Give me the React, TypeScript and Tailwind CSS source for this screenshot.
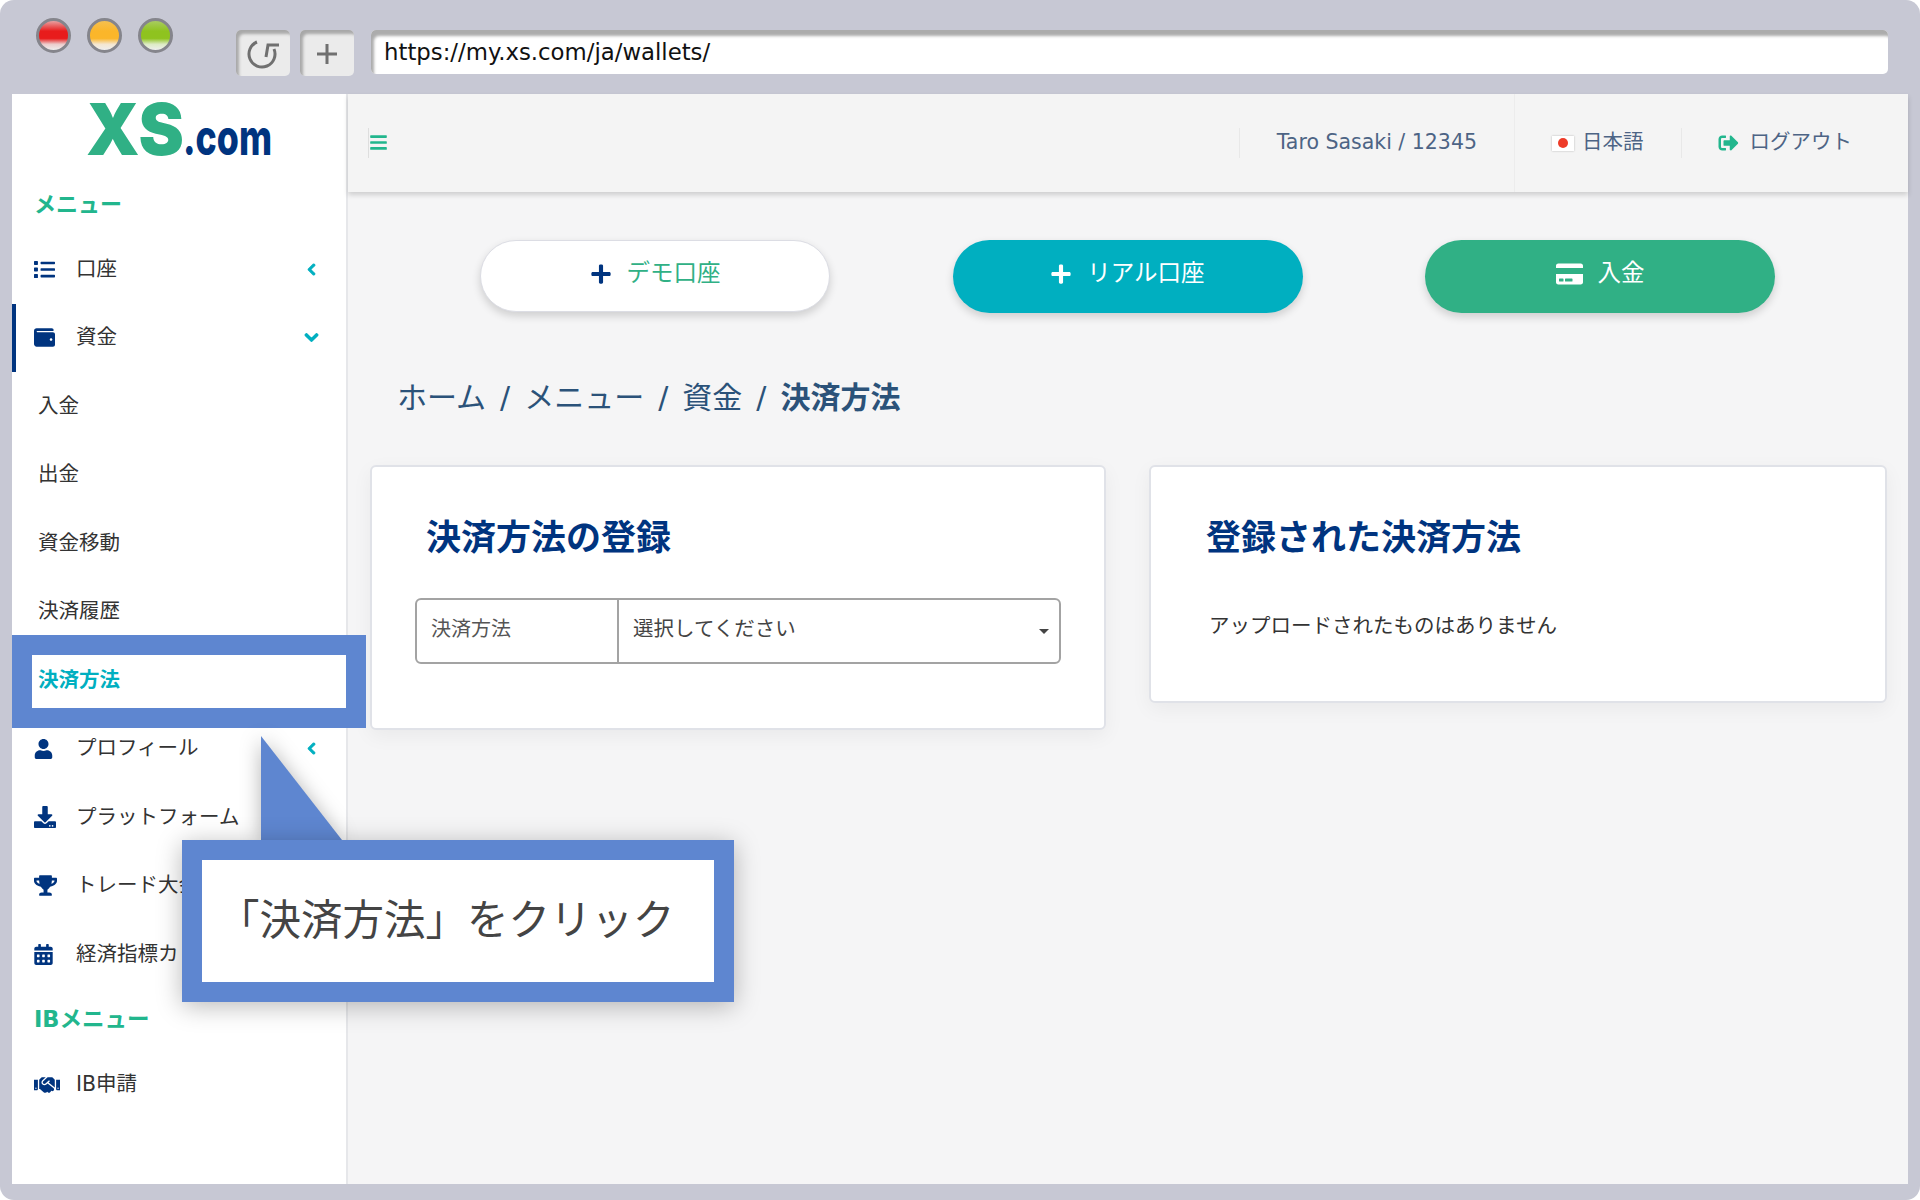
import React from 'react';
import { FaBars, FaCalendarAlt, FaChevronDown, FaChevronLeft, FaCreditCard, FaDownload, FaHandshake, FaList, FaPlus, FaSignOutAlt, FaTrophy, FaUser, FaWallet } from 'react-icons/fa';

const Light = ({ color }: { color: string }) => (
  <div className={`w-[35px] h-[35px] rounded-full border-[3px] border-[#85858c] ${color}`} />
);

const NavRow = ({ icon, label, chevron, active }: { icon: React.ReactNode; label: string; chevron?: 'left' | 'down'; active?: boolean }) => (
  <div className={`h-[68.5px] flex items-center pl-[18px] text-[20.5px] text-[#333] border-l-4 ${active ? 'border-[#00347f]' : 'border-transparent'}`}>
    <div className="w-[42px] flex items-center text-[#00347f]">{icon}</div>
    <span className="flex-1 whitespace-nowrap">{label}</span>
    {chevron === 'left' && <FaChevronLeft stroke="currentColor" strokeWidth={40} className="text-[#00afc0] w-[13px] h-[13px] mr-[28px]" />}
    {chevron === 'down' && <FaChevronDown stroke="currentColor" strokeWidth={40} className="text-[#00afc0] w-[15px] h-[15px] mr-[27px]" />}
  </div>
);

const SubRow = ({ label, active }: { label: string; active?: boolean }) => (
  <div className={`h-[68.5px] flex items-center pl-[26px] text-[20.5px] ${active ? 'font-bold text-[#00afc0]' : 'text-[#333]'}`}>{label}</div>
);

const Logo = () => (
  <svg width="240" height="84" viewBox="0 0 240 84" className="ml-[70px] -mt-[13px] overflow-visible">
    <text x="4" y="74" textLength="98" lengthAdjust="spacingAndGlyphs" fontFamily="Inter" fontWeight="900" fontSize="72" fill="#30b085">XS</text>
    <text x="101" y="74" textLength="89" lengthAdjust="spacingAndGlyphs" fontFamily="Inter" fontWeight="800" fontSize="50" fill="#00347f">.com</text>
  </svg>
);

export default function App() {
  return (
    <div className="relative w-[1920px] h-[1200px] bg-white font-['DejaVu_Sans','Noto_Sans_CJK_JP',sans-serif] overflow-hidden">
      <div className="w-full h-full rounded-[14px] bg-[#c7c8d4] px-3 flex flex-col">
        {/* browser chrome */}
        <div className="h-[94px] flex shrink-0">
          <div className="flex gap-[16px] ml-[24px] mt-[18px] h-[35px]">
            <Light color="bg-[linear-gradient(#e8a0a0_0%,#e81c1c_35%,#e81c1c_60%,#eccccc_80%,#eeeeee_100%)]" />
            <Light color="bg-[linear-gradient(#f5c050_0%,#fbb62a_35%,#fbb62a_60%,#f4e6d0_80%,#eeeeee_100%)]" />
            <Light color="bg-[linear-gradient(#a8cc60_0%,#8fc31f_35%,#8fc31f_60%,#dcebc4_80%,#eeeeee_100%)]" />
          </div>
          <div className="flex gap-[10px] ml-[63px] mt-[30px] h-[46px]">
            <div className="w-[54px] rounded-[5px] bg-[#ebebeb] shadow-[inset_3px_4px_3px_#a8a8a8] flex items-center justify-center pt-[2px]">
              <svg width="34" height="34" viewBox="0 0 34 34" fill="none" stroke="#707070" strokeWidth="3">
                <path d="M11 5A13 13 0 1 0 28 12" />
                <path d="M20 20L22 8H33" />
              </svg>
            </div>
            <div className="w-[54px] rounded-[5px] bg-[#ebebeb] shadow-[inset_3px_4px_3px_#a8a8a8] flex items-center justify-center pt-[2px]">
              <svg width="24" height="24" viewBox="0 0 24 24" stroke="#707070" strokeWidth="3"><path d="M12 2V22M2 12H22" /></svg>
            </div>
          </div>
          <div className="w-[1517px] h-[44px] ml-[17px] mt-[30px] rounded-[5px] bg-white shadow-[inset_3px_6px_3px_#acacac] flex items-center pl-[13px] text-[22.8px] text-[#111]">
            https://my.xs.com/ja/wallets/
          </div>
        </div>

        <div className="h-[1090px] flex shrink-0">
          {/* sidebar */}
          <aside className="w-[336px] shrink-0 bg-white border-r-2 border-[#e6e7ea]">
            <div className="h-[91px] flex items-start"><Logo /></div>
            <div className="h-[41px] flex items-center pl-[22px] pb-[2px] text-[22px] font-bold text-[#22b68d]">メニュー</div>
            <div className="mt-[9px]">
              <NavRow icon={<FaList className="w-[21px] h-[21px]" />} label="口座" chevron="left" />
              <NavRow icon={<FaWallet className="w-[21px] h-[21px]" />} label="資金" chevron="down" active />
              <SubRow label="入金" />
              <SubRow label="出金" />
              <SubRow label="資金移動" />
              <SubRow label="決済履歴" />
              <SubRow label="決済方法" active />
              <NavRow icon={<FaUser className="w-[19px] h-[20px]" />} label="プロフィール" chevron="left" />
              <NavRow icon={<FaDownload className="w-[22px] h-[22px]" />} label="プラットフォーム" />
              <NavRow icon={<FaTrophy className="w-[23px] h-[21px]" />} label="トレード大会" />
              <NavRow icon={<FaCalendarAlt className="w-[19px] h-[21px]" />} label="経済指標カレンダー" />
            </div>
            <div className="h-[62px] flex items-center pl-[22px] text-[22.5px] font-bold text-[#22b68d]">IBメニュー</div>
            <NavRow icon={<FaHandshake className="w-[26px] h-[22px]" />} label="IB申請" />
          </aside>

          {/* main */}
          <main className="w-[1560px] shrink-0 bg-[#f5f5f6]">
            <header className="h-[98px] bg-[#f4f4f4] shadow-[0_3px_5px_rgba(0,0,0,0.16)] flex items-center text-[20.5px] text-[#4d6485]">
              <div className="ml-[20px] h-[30px] pb-[2px] border-l border-[#dedede] flex items-center">
                <FaBars className="text-[#22b68d] w-[19px] h-[19px]" />
              </div>
              <div className="ml-auto h-[30px] border-l border-[#e8e8e8] flex items-center pl-[37px] pr-[37px] pb-[2px]">Taro Sasaki / 12345</div>
              <div className="h-full border-l border-[#ececec] flex items-center pl-[37px] pr-[37px]">
                <div className="w-[22px] h-[15px] bg-white shadow-[0_0_2px_rgba(0,0,0,0.25)] flex items-center justify-center mr-[8px]">
                  <div className="w-[10px] h-[10px] rounded-full bg-[#ee3b28]" />
                </div>
                <span className="pb-[2px]">日本語</span>
              </div>
              <div className="h-[30px] border-l border-[#e8e8e8] flex items-center pl-[36px] pr-[56px]">
                <FaSignOutAlt className="text-[#22b68d] w-[21px] h-[20px] mr-[11px]" />
                <span className="pb-[2px]">ログアウト</span>
              </div>
            </header>

            <div className="flex gap-[122.5px] pl-[132px] mt-[48px] text-[23.5px]">
              <div className="w-[350px] h-[72px] rounded-full bg-white border border-[#dcdde4] shadow-[0_4px_8px_rgba(0,0,0,0.16)] flex items-center justify-center gap-[15px] pb-[5px] text-[#30b085]">
                <FaPlus className="text-[#00347f] w-[22px] h-[22px]" />
                <span>デモ口座</span>
              </div>
              <div className="w-[350px] h-[73px] rounded-full bg-[#00afc0] shadow-[0_4px_8px_rgba(0,0,0,0.16)] flex items-center justify-center gap-[15px] pb-[5px] text-white">
                <FaPlus className="w-[22px] h-[22px]" />
                <span>リアル口座</span>
              </div>
              <div className="w-[350px] h-[73px] rounded-full bg-[#30b085] shadow-[0_4px_8px_rgba(0,0,0,0.16)] flex items-center justify-center gap-[15px] pb-[5px] text-white">
                <FaCreditCard className="w-[27px] h-[24px]" />
                <span>入金</span>
              </div>
            </div>

            <div className="mt-[63px] pl-[49px] h-[42px] flex items-center gap-[14px] text-[30px] text-[#2b5279]">
              <span>ホーム</span><span>/</span><span>メニュー</span><span>/</span><span>資金</span><span>/</span><span className="font-bold">決済方法</span>
            </div>

            <div className="mt-[47px] pl-[22px] flex items-start gap-[43px]">
              <section className="w-[736px] h-[265px] bg-white rounded-[6px] border-2 border-[#e0e2e8] shadow-[0_6px_20px_rgba(0,0,0,0.05)] pl-[43px] pt-[46px]">
                <h2 className="ml-[11px] text-[35px] leading-[50px] font-bold text-[#00347f]">決済方法の登録</h2>
                <div className="mt-[35px] w-[646px] h-[66px] rounded-[6px] border-2 border-[#a3a3a3] flex items-center text-[20px]">
                  <div className="w-[202px] h-full border-r-2 border-[#a3a3a3] flex items-center pl-[14px] pb-[4px] text-[#555]">決済方法</div>
                  <div className="flex-1 flex items-center pl-[14px] pb-[4px] text-[20.5px] text-[#444]">選択してください</div>
                  <div className="mr-[10px] w-0 h-0 border-x-[5px] border-x-transparent border-t-[5px] border-t-[#444]" />
                </div>
              </section>
              <section className="w-[738px] h-[238px] bg-white rounded-[6px] border-2 border-[#e0e2e8] shadow-[0_6px_20px_rgba(0,0,0,0.05)] pl-[55px] pt-[46px]">
                <h2 className="text-[35px] leading-[50px] font-bold text-[#00347f]">登録された決済方法</h2>
                <p className="ml-[3px] mt-[48px] text-[20.5px] leading-[30px] text-[#333]">アップロードされたものはありません</p>
              </section>
            </div>
          </main>
        </div>
      </div>

      {/* highlight round the menu item */}
      <div className="absolute left-[12px] top-[635px] w-[354px] h-[93px] border-[20px] border-[#5e86d0]" />

      {/* callout */}
      <svg className="absolute left-[261px] top-[736px] drop-shadow-[0_2px_10px_rgba(0,0,0,0.3)]" width="82" height="105" viewBox="0 0 82 105">
        <path d="M0 0L81 104H0Z" fill="#5e86d0" />
      </svg>
      <div className="absolute left-[182px] top-[840px] w-[552px] h-[162px] border-[20px] border-[#5e86d0] bg-white shadow-[0_4px_24px_rgba(0,0,0,0.28)] flex items-center pl-[16px] text-[41.5px] text-[#444] whitespace-nowrap">
        「決済方法」をクリック
      </div>
    </div>
  );
}
